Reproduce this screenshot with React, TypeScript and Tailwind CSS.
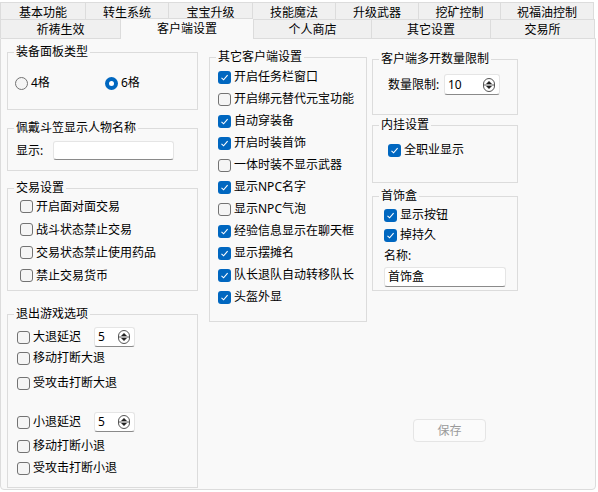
import React from 'react';

const font = { fontFamily: '"Noto Sans", "Noto Sans CJK SC", sans-serif' };

const row1 = [
  { label: '基本功能', w: 'w-[85px]' },
  { label: '转生系统', w: 'w-[83px]' },
  { label: '宝宝升级', w: 'w-[84px]' },
  { label: '技能魔法', w: 'w-[83px]' },
  { label: '升级武器', w: 'w-[83px]' },
  { label: '挖矿控制', w: 'w-[82px]' },
  { label: '祝福油控制', w: 'w-[94px]' },
];

const row2 = [
  { label: '祈祷生效', w: 'w-[120px]' },
  { label: '客户端设置', w: 'w-[133px]', active: true },
  { label: '个人商店', w: 'w-[118px]' },
  { label: '其它设置', w: 'w-[119px]' },
  { label: '交易所', w: 'w-[105px]' },
];

const CheckBox: React.FC<{ checked?: boolean }> = ({ checked }) =>
  checked ? (
    <span className="w-[13px] h-[13px] rounded-[3px] bg-[#0067c0] flex items-center justify-center shrink-0">
      <svg width="9" height="9" viewBox="0 0 9 9">
        <path d="M1.5 4.8 L3.6 6.8 L7.6 2.2" fill="none" stroke="#fff" strokeWidth="1.1" />
      </svg>
    </span>
  ) : (
    <span className="w-[13px] h-[13px] rounded-[3px] border border-[#737373] bg-[#f5f5f5] shrink-0" />
  );

const Radio: React.FC<{ checked?: boolean }> = ({ checked }) =>
  checked ? (
    <span className="w-[13px] h-[13px] rounded-full bg-[#0067c0] flex items-center justify-center shrink-0">
      <span className="w-[5px] h-[5px] rounded-full bg-white" />
    </span>
  ) : (
    <span className="w-[13px] h-[13px] rounded-full border border-[#737373] bg-[#f5f5f5] shrink-0" />
  );

const Check: React.FC<{ label: string; checked?: boolean; className?: string }> = ({ label, checked, className }) => (
  <div className={`flex items-center gap-[3px] ${className ?? 'h-[22px]'}`}>
    <CheckBox checked={checked} />
    <span>{label}</span>
  </div>
);

const Spinner: React.FC<{ value: string; w: string; h: string }> = ({ value, w, h }) => (
  <div className={`${w} ${h} bg-white border border-[#e5e5e5] border-b-[#8a8a8a] rounded-[3px] flex items-center justify-between pl-[3px] pr-[4px]`}>
    <span>{value}</span>
    <svg width="12" height="14" viewBox="0 0 12 14">
      <rect x="0.5" y="0.5" width="11" height="13" rx="5.5" fill="#fff" stroke="#555" />
      <path d="M3 6 L6 3 L9 6 Z" fill="#222" />
      <path d="M3 8 L6 11 L9 8 Z" fill="#222" />
      <line x1="1" y1="7" x2="11" y2="7" stroke="#555" />
    </svg>
  </div>
);

const Group: React.FC<{ title: string; className: string; children: React.ReactNode }> = ({ title, className, children }) => (
  <fieldset className={`border border-[#dcdcdc] ${className}`}>
    <legend className="ml-[6px] px-[2px] leading-[16px]">{title}</legend>
    {children}
  </fieldset>
);

const App: React.FC = () => {
  return (
    <div className="w-[598px] h-[492px] bg-white text-[12px] text-black overflow-hidden" style={font}>
      {/* tabs */}
      <div className="flex pt-[2px] h-[19px]">
        {row1.map((t, i) => (
          <div
            key={t.label}
            className={`${t.w} h-[17px] border-t border-l border-[#dcdcdc] bg-[#f0f0f0] flex items-center justify-center pt-[3px] ${i === row1.length - 1 ? 'border-r' : ''}`}
          >
            {t.label}
          </div>
        ))}
      </div>
      <div className="flex h-[19px] items-end">
        {row2.map((t, i) =>
          t.active ? (
            <div
              key={t.label}
              className={`${t.w} h-[21px] -mb-px relative z-10 border-t border-l border-[#dcdcdc] bg-[#f9f9f9] flex items-center justify-center`}
            >
              {t.label}
            </div>
          ) : (
            <div
              key={t.label}
              className={`${t.w} h-[19px] self-start border-t border-l border-[#dcdcdc] bg-[#f0f0f0] flex items-center justify-center pt-[2px] ${i === row2.length - 1 ? 'border-r' : ''}`}
            >
              {t.label}
            </div>
          )
        )}
      </div>

      {/* panel */}
      <div className="w-[596px] h-[452px] bg-[#f9f9f9] border border-[#dcdcdc] rounded-b-[4px] flex pl-[6px] items-start">
        {/* left column */}
        <div className="w-[191px] pt-[5px] flex flex-col">
          <Group title="装备面板类型" className="h-[66px]">
            <div className="flex items-center h-[20px] mt-[13px] pl-[7px]">
              <div className="flex items-center gap-[3px] w-[90px]">
                <Radio />
                <span>4格</span>
              </div>
              <div className="flex items-center gap-[3px]">
                <Radio checked />
                <span>6格</span>
              </div>
            </div>
          </Group>
          <Group title="佩戴斗笠显示人物名称" className="h-[51px] mt-[10px]">
            <div className="flex items-center h-[19px] mt-[5px] pl-[8px]">
              <span className="w-[37px]">显示:</span>
              <div className="w-[121px] h-[19px] bg-white border border-[#e5e5e5] border-b-[#8a8a8a] rounded-[3px]" />
            </div>
          </Group>
          <Group title="交易设置" className="h-[111px] mt-[9px]">
            <div className="-mt-px pl-[12px] flex flex-col">
              <Check label="开启面对面交易" className="h-[23px]" />
              <Check label="战斗状态禁止交易" className="h-[23px]" />
              <Check label="交易状态禁止使用药品" className="h-[23px]" />
              <Check label="禁止交易货币" className="h-[23px]" />
            </div>
          </Group>
          <Group title="退出游戏选项" className="h-[182px] mt-[15px]">
            <div className="pl-[9px] pt-[5px] flex flex-col">
              <div className="flex items-center h-[20px]">
                <div className="flex items-center gap-[3px] w-[77px]">
                  <CheckBox />
                  <span>大退延迟</span>
                </div>
                <Spinner value="5" w="w-[41px]" h="h-[20px]" />
              </div>
              <Check label="移动打断大退" className="h-[20px] mt-[1px]" />
              <Check label="受攻击打断大退" className="h-[20px] mt-[5px]" />
              <div className="flex items-center h-[20px] mt-[19px]">
                <div className="flex items-center gap-[3px] w-[77px]">
                  <CheckBox />
                  <span>小退延迟</span>
                </div>
                <Spinner value="5" w="w-[41px]" h="h-[20px]" />
              </div>
              <Check label="移动打断小退" className="h-[20px] mt-[4px]" />
              <Check label="受攻击打断小退" className="h-[20px] mt-[2px]" />
            </div>
          </Group>
        </div>

        {/* middle column */}
        <div className="w-[158px] ml-[11px] pt-[10px]">
          <Group title="其它客户端设置" className="h-[273px]">
            <div className="pl-[8px] pt-px flex flex-col">
              <Check label="开启任务栏窗口" checked />
              <Check label="开启绑元替代元宝功能" />
              <Check label="自动穿装备" checked />
              <Check label="开启时装首饰" checked />
              <Check label="一体时装不显示武器" />
              <Check label="显示NPC名字" checked />
              <Check label="显示NPC气泡" />
              <Check label="经验信息显示在聊天框" checked />
              <Check label="显示摆摊名" checked />
              <Check label="队长退队自动转移队长" checked />
              <Check label="头盔外显" checked />
            </div>
          </Group>
        </div>

        {/* right column */}
        <div className="w-[146px] ml-[5px] pt-[12px] flex flex-col">
          <Group title="客户端多开数量限制" className="h-[64px]">
            <div className="flex items-center h-[21px] mt-[7px] pl-[15px]">
              <span className="w-[56px]">数量限制:</span>
              <Spinner value="10" w="w-[56px]" h="h-[21px]" />
            </div>
          </Group>
          <Group title="内挂设置" className="h-[66px] mt-[2px]">
            <div className="pl-[15px] mt-[7px]">
              <Check label="全职业显示" checked className="h-[20px]" />
            </div>
          </Group>
          <Group title="首饰盒" className="h-[103px] mt-[5px]">
            <div className="pl-[11px] mt-px flex flex-col">
              <Check label="显示按钮" checked className="h-[20px]" />
              <Check label="掉持久" checked className="h-[20px]" />
              <div className="h-[22px] flex items-center">名称:</div>
              <div className="w-[122px] h-[20px] bg-white border border-[#e5e5e5] border-b-[#8a8a8a] rounded-[3px] flex items-center pl-[3px]">
                首饰盒
              </div>
            </div>
          </Group>
          <button className="w-[73px] h-[23px] ml-[41px] mt-[128px] border border-[#e5e5e5] bg-[#fbfbfb] rounded-[4px] text-[#9a9a9a] text-[12px] flex items-center justify-center">
            保存
          </button>
        </div>
      </div>
    </div>
  );
};

export default App;
